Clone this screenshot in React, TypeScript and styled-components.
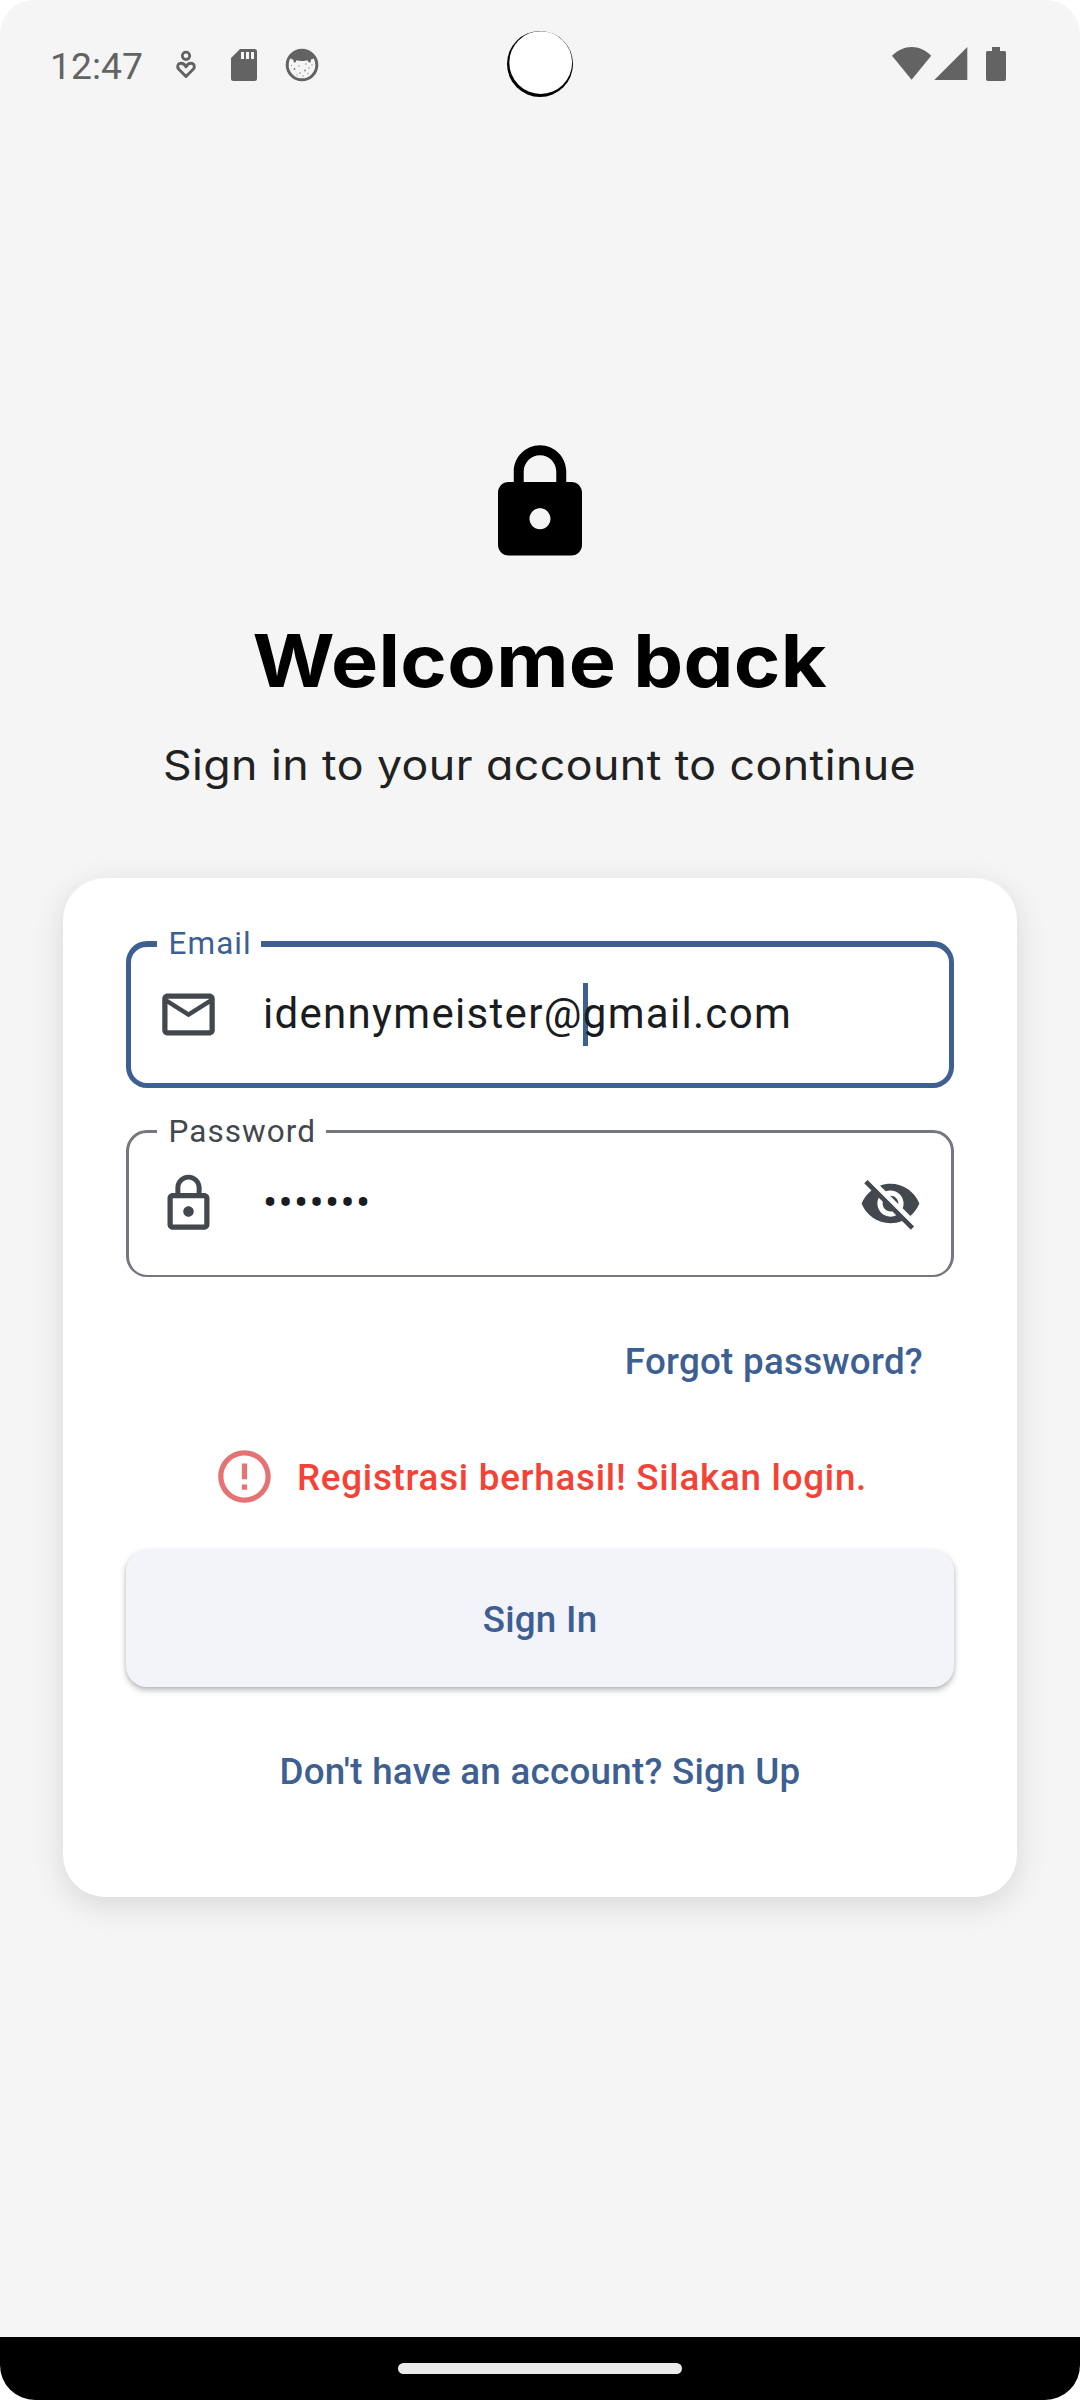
import React from "react";
import styled, { createGlobalStyle } from "styled-components";
import {
  MdLock,
  MdOutlineEmail,
  MdLockOutline,
  MdVisibilityOff,
  MdErrorOutline,
} from "react-icons/md";

const primary = "#3e5f92";
const muted = "#43474e";
const status = "#636363";
const surface = "#f5f5f5";

const GlobalStyle = createGlobalStyle`
  * { box-sizing: border-box; }
  body { margin: 0; background: #fff; font-family: Roboto, "Liberation Sans", sans-serif; }
`;

const Screen = styled.div`
  width: 1080px;
  height: 2400px;
  display: flex;
  flex-direction: column;
  background: ${surface};
  border-radius: 34px 34px 35px 35px;
  overflow: hidden;
`;

const StatusBar = styled.header`
  height: 128px;
  flex: none;
  display: grid;
  grid-template-columns: 1fr 68px 1fr;
  align-items: center;
`;

const StatusSide = styled.div<{ $end?: boolean }>`
  display: flex;
  align-items: center;
  justify-content: ${(p) => (p.$end ? "flex-end" : "flex-start")};
  padding: ${(p) => (p.$end ? "0 73px 0 0" : "2px 0 0 50px")};
`;

const Clock = styled.span`
  width: 118px;
  padding-top: 1px;
  font-size: 37.3px;
  line-height: 44px;
  color: ${status};
`;

const Content = styled.main`
  flex: 1;
  display: flex;
  flex-direction: column;
  align-items: center;
  padding: 312px 63px 0;
`;

const HeroIcon = styled(MdLock)`
  display: block;
  width: 126px;
  height: 126px;
  color: #000;
`;

const Title = styled.h1`
  margin: 50px 0 0;
  font: 700 73px/90px Inter, sans-serif;
  font-feature-settings: "cv11";
  letter-spacing: 0.3px;
  word-spacing: -2px;
  transform: scaleX(1.085);
  color: #000;
  white-space: nowrap;
`;

const Subtitle = styled.p`
  margin: 29px 0 0;
  font: 400 41px/60px Inter, sans-serif;
  font-feature-settings: "cv11";
  letter-spacing: 0.4px;
  transform: scaleX(1.09);
  color: #212121;
  white-space: nowrap;
`;

const Card = styled.section`
  width: 954px;
  height: 1019px;
  margin-top: 83px;
  padding: 63px;
  display: flex;
  flex-direction: column;
  background: #fff;
  border-radius: 42px;
  box-shadow: 0 8px 32px rgba(0, 0, 0, 0.12);
`;

const Field = styled.div<{ $active?: boolean }>`
  position: relative;
  height: 147px;
  flex: none;
  display: flex;
  align-items: center;
  padding: ${(p) => (p.$active ? "0 27px 2px 26px" : "0 29px 2px 28px")};
  border: solid ${(p) => (p.$active ? primary : "#74777f")};
  border-width: ${(p) => (p.$active ? "6px 5px 5px" : "3px 3px 2px")};
  border-radius: 21px;

  & + & {
    margin-top: 42px;
  }

  svg {
    width: 63px;
    height: 63px;
    flex: none;
    color: ${muted};
  }
`;

const FieldLabel = styled.label<{ $active?: boolean; $width: number }>`
  position: absolute;
  left: ${(p) => (p.$active ? 26 : 28)}px;
  top: ${(p) => (p.$active ? -24 : -22)}px;
  width: ${(p) => p.$width}px;
  padding-left: 11.5px;
  background: #fff;
  font-size: 31.5px;
  line-height: 42px;
  letter-spacing: 1.05px;
  color: ${(p) => (p.$active ? primary : muted)};
`;

const FieldValue = styled.span`
  flex: 1;
  margin-left: 43px;
  padding-bottom: 2px;
  font-size: 42px;
  line-height: 63px;
  letter-spacing: 1.31px;
  color: #191c20;
  white-space: nowrap;
`;

const ValueLayer = styled.span`
  position: relative;
  z-index: 0;
`;

const Caret = styled.i`
  position: absolute;
  z-index: -1;
  top: -6px;
  width: 5px;
  height: 63px;
  background: ${primary};
`;

const LinkText = styled.a<{ $end?: boolean }>`
  align-self: ${(p) => (p.$end ? "flex-end" : "center")};
  margin: ${(p) => (p.$end ? "59px 31px 0 0" : "59px 0 0")};
  font-size: 36.75px;
  font-weight: 500;
  line-height: 52px;
  letter-spacing: 0.26px;
  color: ${primary};
`;

const Message = styled.div`
  display: flex;
  align-items: center;
  justify-content: center;
  gap: 21px;
  height: 63px;
  margin-top: 57px;
  font-size: 36.75px;
  font-weight: 500;
  letter-spacing: 0.74px;
  color: #f44336;

  svg {
    width: 63px;
    height: 63px;
    color: #e57373;
  }

  span {
    padding-top: 2px;
  }
`;

const SignIn = styled.button`
  height: 137px;
  flex: none;
  margin-top: 42px;
  padding: 2px 0 0;
  border: 0;
  border-radius: 21px;
  background: #f3f3fa;
  box-shadow: 0 3px 6px rgba(0, 0, 0, 0.28), 0 1px 3px rgba(0, 0, 0, 0.06);
  font: 500 36.75px Roboto, sans-serif;
  letter-spacing: 0.26px;
  color: ${primary};
`;

const NavBar = styled.footer`
  height: 63px;
  flex: none;
  display: flex;
  justify-content: center;
  align-items: center;
  background: #000;
`;

const NavHandle = styled.div`
  width: 284px;
  height: 11px;
  border-radius: 6px;
  background: #ebebeb;
`;

const NotificationIcons = () => (
  <svg width="160" height="50" viewBox="168 40 160 50" fill="none">
    <circle cx="186" cy="55.8" r="3.7" stroke={status} strokeWidth="2.8" />
    <path
      d="M186 76.5l-7.2-7.2c-2.300-2.600-.9-6 2.300-6 2.200 0 3.900 1.500 4.900 3.500 1-2 2.700-3.500 4.900-3.500 3.200 0 4.600 3.400 2.300 6z"
      stroke={status}
      strokeWidth="2.9"
      strokeLinejoin="round"
    />
    <path
      d="M240 49h14.500a2.500 2.500 0 0 1 2.500 2.500v27a2.500 2.500 0 0 1-2.500 2.500h-21a2.500 2.500 0 0 1-2.500-2.500V58z"
      fill={status}
    />
    <path d="M241 52h3v7h-3zM246 52h3v7h-3zM251 52h3v7h-3z" fill={surface} />
    <circle cx="302" cy="65" r="14.800" fill={surface} stroke={status} strokeWidth="3" />
    <path
      d="M291.500 54c5-5 16-5 21 0l2.500 4-4 1.500-.5 3-2-.2-1-2c-3 1-8 1-11 0l-1 2-1.500.5-.8-3-4.200-2z"
      fill={status}
    />
    <g fill={status} opacity="0.75">
      <circle cx="294.500" cy="69" r="1" />
      <circle cx="299" cy="66" r=".7" />
      <circle cx="306" cy="64" r=".8" />
      <circle cx="300" cy="73" r=".8" />
      <circle cx="305" cy="70.500" r=".9" />
      <circle cx="309" cy="68" r=".7" />
      <circle cx="303" cy="76" r=".7" />
      <circle cx="308" cy="73.500" r=".7" />
      <circle cx="291.500" cy="65.500" r=".6" />
      <circle cx="312" cy="65" r=".7" />
      <circle cx="297" cy="75" r=".6" />
    </g>
  </svg>
);

const SystemIcons = () => (
  <svg width="116" height="36" viewBox="891 46 116 36" fill={status}>
    <path d="M892 55.800c11.500-11.800 28-11.800 39.200 0L911.600 79.800z" />
    <path d="M967.300 47v33h-33z" />
    <path d="M992 47h8v4h4.500a1.500 1.500 0 0 1 1.500 1.500v26.500a2 2 0 0 1-2 2h-16a2 2 0 0 1-2-2v-26.500a1.500 1.500 0 0 1 1.500-1.500h4.500z" />
  </svg>
);

const Camera = () => (
  <svg width="68" height="68" viewBox="506 30 68 68">
    <circle cx="540" cy="64" r="33" fill="#000" />
    <circle cx="540.700" cy="62.600" r="31.400" fill="#fff" />
  </svg>
);

export default function App() {
  return (
    <>
      <GlobalStyle />
      <Screen>
        <StatusBar>
          <StatusSide>
            <Clock>12:47</Clock>
            <NotificationIcons />
          </StatusSide>
          <Camera />
          <StatusSide $end>
            <SystemIcons />
          </StatusSide>
        </StatusBar>
        <Content>
          <HeroIcon />
          <Title>Welcome back</Title>
          <Subtitle>Sign in to your account to continue</Subtitle>
          <Card>
            <Field $active>
              <FieldLabel $active $width={104}>Email</FieldLabel>
              <MdOutlineEmail />
              <FieldValue>
                <ValueLayer>
                  idennymeister@<Caret />gmail.com
                </ValueLayer>
              </FieldValue>
            </Field>
            <Field>
              <FieldLabel $width={169}>Password</FieldLabel>
              <MdLockOutline />
              <FieldValue>•••••••</FieldValue>
              <MdVisibilityOff />
            </Field>
            <LinkText $end>Forgot password?</LinkText>
            <Message>
              <MdErrorOutline />
              <span>Registrasi berhasil! Silakan login.</span>
            </Message>
            <SignIn>Sign In</SignIn>
            <LinkText>Don't have an account? Sign Up</LinkText>
          </Card>
        </Content>
        <NavBar>
          <NavHandle />
        </NavBar>
      </Screen>
    </>
  );
}
